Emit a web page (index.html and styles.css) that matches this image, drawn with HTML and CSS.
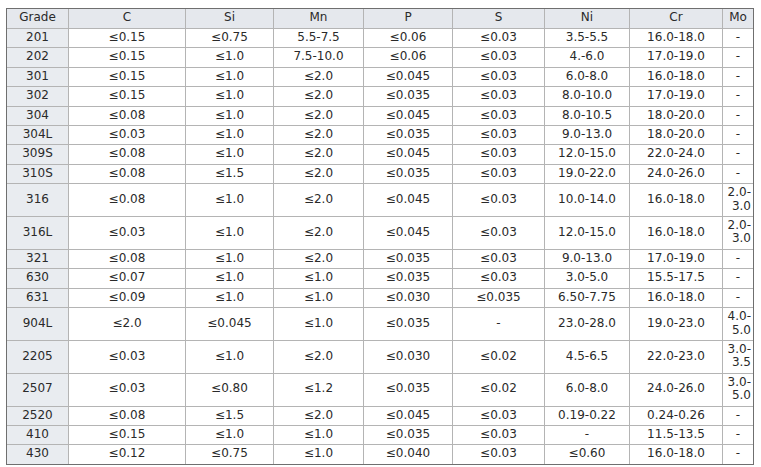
FILE: index.html
```html
<!DOCTYPE html>
<html lang="en">
<head>
<meta charset="utf-8">
<title>Stainless Steel Grades – Chemical Composition</title>
<link rel="stylesheet" href="styles.css">
</head>
<body>
<table class="grades">
  <colgroup>
    <col class="c-grade"><col class="c-c"><col class="c-si"><col class="c-mn"><col class="c-p"><col class="c-s"><col class="c-ni"><col class="c-cr"><col class="c-mo">
  </colgroup>
  <thead>
    <tr><th>Grade</th><th>C</th><th>Si</th><th>Mn</th><th>P</th><th>S</th><th>Ni</th><th>Cr</th><th>Mo</th></tr>
  </thead>
  <tbody>
    <tr><th>201</th><td>≤0.15</td><td>≤0.75</td><td>5.5-7.5</td><td>≤0.06</td><td>≤0.03</td><td>3.5-5.5</td><td>16.0-18.0</td><td>-</td></tr>
    <tr><th>202</th><td>≤0.15</td><td>≤1.0</td><td>7.5-10.0</td><td>≤0.06</td><td>≤0.03</td><td>4.-6.0</td><td>17.0-19.0</td><td>-</td></tr>
    <tr><th>301</th><td>≤0.15</td><td>≤1.0</td><td>≤2.0</td><td>≤0.045</td><td>≤0.03</td><td>6.0-8.0</td><td>16.0-18.0</td><td>-</td></tr>
    <tr><th>302</th><td>≤0.15</td><td>≤1.0</td><td>≤2.0</td><td>≤0.035</td><td>≤0.03</td><td>8.0-10.0</td><td>17.0-19.0</td><td>-</td></tr>
    <tr><th>304</th><td>≤0.08</td><td>≤1.0</td><td>≤2.0</td><td>≤0.045</td><td>≤0.03</td><td>8.0-10.5</td><td>18.0-20.0</td><td>-</td></tr>
    <tr><th>304L</th><td>≤0.03</td><td>≤1.0</td><td>≤2.0</td><td>≤0.035</td><td>≤0.03</td><td>9.0-13.0</td><td>18.0-20.0</td><td>-</td></tr>
    <tr><th>309S</th><td>≤0.08</td><td>≤1.0</td><td>≤2.0</td><td>≤0.045</td><td>≤0.03</td><td>12.0-15.0</td><td>22.0-24.0</td><td>-</td></tr>
    <tr><th>310S</th><td>≤0.08</td><td>≤1.5</td><td>≤2.0</td><td>≤0.035</td><td>≤0.03</td><td>19.0-22.0</td><td>24.0-26.0</td><td>-</td></tr>
    <tr><th>316</th><td>≤0.08</td><td>≤1.0</td><td>≤2.0</td><td>≤0.045</td><td>≤0.03</td><td>10.0-14.0</td><td>16.0-18.0</td><td class="mo">2.0-<wbr>3.0</td></tr>
    <tr><th>316L</th><td>≤0.03</td><td>≤1.0</td><td>≤2.0</td><td>≤0.045</td><td>≤0.03</td><td>12.0-15.0</td><td>16.0-18.0</td><td class="mo">2.0-<wbr>3.0</td></tr>
    <tr><th>321</th><td>≤0.08</td><td>≤1.0</td><td>≤2.0</td><td>≤0.035</td><td>≤0.03</td><td>9.0-13.0</td><td>17.0-19.0</td><td>-</td></tr>
    <tr><th>630</th><td>≤0.07</td><td>≤1.0</td><td>≤1.0</td><td>≤0.035</td><td>≤0.03</td><td>3.0-5.0</td><td>15.5-17.5</td><td>-</td></tr>
    <tr><th>631</th><td>≤0.09</td><td>≤1.0</td><td>≤1.0</td><td>≤0.030</td><td>≤0.035</td><td>6.50-7.75</td><td>16.0-18.0</td><td>-</td></tr>
    <tr><th>904L</th><td>≤2.0</td><td>≤0.045</td><td>≤1.0</td><td>≤0.035</td><td>-</td><td>23.0-28.0</td><td>19.0-23.0</td><td class="mo">4.0-<wbr>5.0</td></tr>
    <tr><th>2205</th><td>≤0.03</td><td>≤1.0</td><td>≤2.0</td><td>≤0.030</td><td>≤0.02</td><td>4.5-6.5</td><td>22.0-23.0</td><td class="mo">3.0-<wbr>3.5</td></tr>
    <tr><th>2507</th><td>≤0.03</td><td>≤0.80</td><td>≤1.2</td><td>≤0.035</td><td>≤0.02</td><td>6.0-8.0</td><td>24.0-26.0</td><td class="mo">3.0-<wbr>5.0</td></tr>
    <tr><th>2520</th><td>≤0.08</td><td>≤1.5</td><td>≤2.0</td><td>≤0.045</td><td>≤0.03</td><td>0.19-0.22</td><td>0.24-0.26</td><td>-</td></tr>
    <tr><th>410</th><td>≤0.15</td><td>≤1.0</td><td>≤1.0</td><td>≤0.035</td><td>≤0.03</td><td>-</td><td>11.5-13.5</td><td>-</td></tr>
    <tr><th>430</th><td>≤0.12</td><td>≤0.75</td><td>≤1.0</td><td>≤0.040</td><td>≤0.03</td><td>≤0.60</td><td>16.0-18.0</td><td>-</td></tr>
  </tbody>
</table>
</body>
</html>
```
FILE: styles.css
```css
html, body {
  margin: 0;
  padding: 0;
  background: #ffffff;
}

body {
  padding: 8px 0 0 6px;
  font-family: "DejaVu Sans", Verdana, sans-serif;
  font-size: 12px;
  color: #2a2a2a;
}

.grades {
  table-layout: fixed;
  width: 747px;
  border-collapse: separate;
  border-spacing: 0;
  border: 1px solid #6f6f6f;
}

.c-grade { width: 62px; }
.c-c { width: 117px; }
.c-si { width: 88px; }
.c-mn { width: 90px; }
.c-p { width: 89px; }
.c-s { width: 92px; }
.c-ni { width: 85px; }
.c-cr { width: 93px; }
.c-mo { width: 30px; }

.grades th,
.grades td {
  box-sizing: border-box;
  padding: 2px 1px 3px;
  line-height: 13.4px;
  text-align: center;
  font-weight: normal;
  border-right: 1px solid #b4b4b4;
  border-bottom: 1px solid #b4b4b4;
  vertical-align: middle;
}

.grades tr > :last-child {
  border-right: 0;
}

.grades tbody tr:last-child > * {
  border-bottom: 0;
}

.grades thead th {
  background: #e5e8ed;
  height: 20px;
  padding-top: 2px;
  padding-bottom: 3px;
}

.grades tbody th {
  background: #e9ecf0;
}

.grades td.mo {
  text-align: right;
  padding-right: 2px;
}
```
